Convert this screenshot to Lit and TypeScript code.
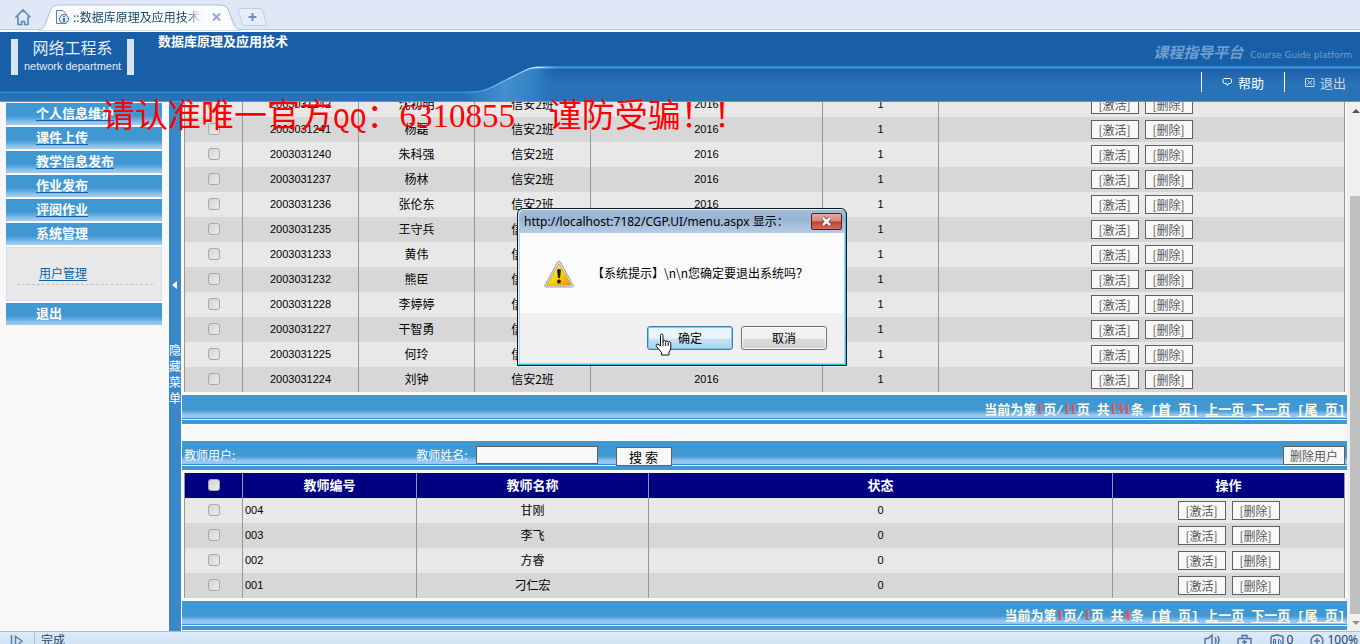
import { LitElement, html, css } from "lit";
import { customElement } from "lit/decorators.js";

type Person = [string, string];

const students: Person[] = [
  ["2003031242", "沈初明"],
  ["2003031241", "杨磊"],
  ["2003031240", "朱科强"],
  ["2003031237", "杨林"],
  ["2003031236", "张伦东"],
  ["2003031235", "王守兵"],
  ["2003031233", "黄伟"],
  ["2003031232", "熊臣"],
  ["2003031228", "李婷婷"],
  ["2003031227", "干智勇"],
  ["2003031225", "何玲"],
  ["2003031224", "刘钟"],
];

const teachers: Person[] = [
  ["004", "甘刚"],
  ["003", "李飞"],
  ["002", "方睿"],
  ["001", "刁仁宏"],
];

const controls = css`
  :host { display: block; }
  * { box-sizing: border-box; }
  button, input { font-family: inherit; margin: 0; }
  input[type="checkbox"] {
    appearance: none;
    display: block;
    width: 12px;
    height: 12px;
    margin: 0 auto;
    border: 1px solid #a8a8a8;
    border-radius: 3px;
    background: linear-gradient(135deg, #d4d4d4, #ececec);
  }
  .plain {
    height: 19px;
    padding: 0;
    border: 1px solid #606060;
    background: #f8f8f8;
    color: #585858;
    font-size: 12px;
    line-height: 17px;
  }
`;

/** Browser chrome: home button, page tab and new-tab button. */
@customElement("tab-strip")
class TabStrip extends LitElement {
  static styles = css`
    :host { display: block; }
    .strip {
      display: flex;
      height: 32px;
      background: linear-gradient(#e0e7f6 29px, #b9c8dd 29px 30px, #fbfcfe 30px);
    }
    button { padding: 0; border: 0; background: none; }
    .home { width: 44px; height: 28px; padding: 2px 0 0 3px; }
    .tab {
      position: relative;
      display: flex;
      align-items: center;
      width: 196px;
      height: 30px;
      margin-left: -5px;
      padding: 4px 0 0 16px;
      box-sizing: border-box;
    }
    .shape { position: absolute; inset: 0; }
    .icon, .title, .close { position: relative; }
    .title {
      flex: 0 0 130px;
      margin-left: 4px;
      overflow: hidden;
      white-space: nowrap;
      font-size: 12px;
      line-height: 18px;
      color: #1d4468;
      mask-image: linear-gradient(90deg, #000 112px, transparent);
    }
    .close { flex: none; width: 16px; height: 16px; margin-left: 6px; }
    .add { width: 32px; height: 30px; margin-left: 1px; padding-top: 4px; }
    svg { display: block; flex: none; }
  `;
  render() {
    return html`<nav class="strip">
      <button class="home" aria-label="主页">
        <svg width="40" height="26" fill="none" stroke="#5f86b6" stroke-width="1.6">
          <path d="M12.500 15.500 20 8l7.500 7.500M15 14.500v8h3.500v-3h3v3H25v-8" />
        </svg>
      </button>
      <div class="tab">
        <svg class="shape" width="202" height="31">
          <path d="M0 29.500C5 29 5 27 7 22L12 9Q14 5 18 5H182Q187 5 189 9L195 25Q197 29.500 202 29.500V31H0Z" fill="#fbfcfe" stroke="#a9bfde" />
        </svg>
        <svg class="icon" width="14" height="16" fill="none" stroke="#6b7f94">
          <path d="M1.500 14.500V1.500H8L11 4.500V14.500Z" fill="#eef3f9" />
          <circle cx="9" cy="10" r="4.500" fill="#dce8f5" stroke="#4a74a0" />
          <path d="M9 7v1M9 9v4" stroke="#1c4f86" stroke-width="1.500" />
        </svg>
        <span class="title">::数据库原理及应用技术课程</span>
        <button class="close" aria-label="关闭标签">
          <svg width="16" height="16" stroke="#8baad0" stroke-width="2"><path d="M4 4.500 11 11.500M11 4.500 4 11.500" /></svg>
        </button>
      </div>
      <button class="add" aria-label="新标签">
        <svg width="34" height="26" fill="none" stroke="#c0cfe4">
          <path d="M3 4.500H24Q26 4.500 27 7L31 21.500H9Q7 21.500 6 19L2 6Q2 4.500 3 4.500Z" fill="#e7edf8" />
          <path d="M16.500 9v8M12.500 13h8" stroke="#7190b8" stroke-width="2" />
        </svg>
      </button>
    </nav>`;
  }
}

/** Blue banner with department logo, course title and top links. */
@customElement("site-banner")
class SiteBanner extends LitElement {
  static styles = css`
    :host { display: block; }
    header {
      position: relative;
      display: flex;
      height: 70px;
      background: linear-gradient(#185fa8 59px, #2e8ad2 60px 61px, #2672b8 61px 69px, #4a9ad8 69px);
      color: #fff;
      overflow: hidden;
    }
    .swoosh { position: absolute; top: 34px; left: 448px; right: 0; display: flex; height: 36px; }
    .swoosh svg { position: relative; z-index: 1; flex: none; }
    .shelf {
      flex: 1;
      margin-left: -20px;
      background: linear-gradient(#2173bc, #389be0 1px 2px, #205fa9 3px, #2873b8 18px 35px, #4a9ad8 35px);
    }
    .logo {
      position: relative;
      display: flex;
      flex-direction: column;
      align-items: center;
      width: 123px;
      height: 36px;
      margin: 7px 0 0 11px;
      box-sizing: border-box;
      border: solid #d9e4f3;
      border-width: 0 7px;
      color: #e4edf8;
      white-space: nowrap;
    }
    .cn { font-size: 16px; line-height: 17px; }
    .en { font: 11px/21px "Liberation Sans", sans-serif; }
    h1 { position: relative; margin: 0 auto 0 24px; font-size: 13px; line-height: 17px; }
    .right { position: relative; display: flex; flex-direction: column; align-items: flex-end; }
    .platform { display: flex; align-items: baseline; gap: 7px; height: 40px; padding: 10px 8px 0 0; box-sizing: border-box; color: #6f9fd0; white-space: nowrap; }
    .platform i { font-size: 15px; font-weight: bold; line-height: 20px; }
    .platform small { font: 9px/20px "DejaVu Sans", sans-serif; }
    .links { display: flex; height: 22px; }
    a {
      display: flex;
      align-items: center;
      gap: 5px;
      height: 20px;
      padding: 0 20px;
      border-left: 1px solid #fff;
      color: #fff;
      font-size: 13px;
      text-decoration: none;
    }
    a + a { color: #c3dcf2; padding: 0 14px 0 19px; }
  `;
  render() {
    return html`<header>
      <div class="swoosh">
        <svg width="108" height="36">
          <defs>
            <linearGradient id="g"><stop offset="0" stop-color="#2672b8" /><stop offset=".45" stop-color="#438fd0" /><stop offset=".78" stop-color="#317fc3" /><stop offset="1" stop-color="#2872b8" stop-opacity="0" /></linearGradient>
            <linearGradient id="l"><stop offset="0" stop-color="#2e8ad2" /><stop offset=".8" stop-color="#c8e4fa" /><stop offset="1" stop-color="#389be0" /></linearGradient>
          </defs>
          <path d="M16 27C42 27 40 22 76 5Q82 1.500 88 1.500H108V35H16Z" fill="url(#g)" />
          <path d="M16 26.500C42 26 40 22 76 5Q82 1.500 88 1.500H108" fill="none" stroke="url(#l)" stroke-width="1.300" />
        </svg>
        <div class="shelf"></div>
      </div>
      <div class="logo"><span class="cn">网络工程系</span><span class="en">network department</span></div>
      <h1>数据库原理及应用技术</h1>
      <div class="right">
        <div class="platform"><i>课程指导平台</i><small>Course Guide platform</small></div>
        <nav class="links">
          <a href="#help"><svg width="11" height="10" fill="none" stroke="currentColor"><path d="M2 1.500h6l1.500 1v3l-1.500 1H6.500L5.500 8.500 4.500 6.500H2.500l-1.500-1v-3Z" /></svg>帮助</a>
          <a href="#exit"><svg width="11" height="11" fill="none" stroke="currentColor"><path d="M1.500 1.500h8.500v8H1.500zM3.500 3.500l4.500 4M8 3.500l-4.500 4" /></svg>退出</a>
        </nav>
      </div>
    </header>`;
  }
}

@customElement("side-menu")
class SideMenu extends LitElement {
  static styles = css`
    :host { display: flex; flex: 0 0 181px; }
    * { box-sizing: border-box; }
    nav { flex: 1; padding: 1px 7px 0 6px; background: #f8f8f8; }
    .item {
      display: block;
      height: 22px;
      margin-bottom: 2px;
      padding-left: 30px;
      background: linear-gradient(#4098d2 13px, #62aadc 16px, #8cc0ea 19px, #a0ccf2);
      color: #fff;
      font-size: 13px;
      font-weight: bold;
      line-height: 20px;
      text-decoration: underline #0d61a4;
      text-underline-offset: 2px;
    }
    .bare { text-decoration: none; }
    .sub { height: 54px; margin-bottom: 2px; padding: 17px 8px 0 10px; border: 1px solid #d0e0f4; background: #e8e8e8; }
    .sub div { height: 20px; padding-left: 22px; border-bottom: 1px dashed #c4c4c4; font-size: 12px; line-height: 16px; }
    .sub a { color: #0d61a4; text-underline-offset: 2px; }
    button {
      display: flex;
      flex-direction: column;
      align-items: center;
      justify-content: flex-start;
      width: 12px;
      padding: 178px 0 0;
      border: 0;
      background: #3a88ca;
      color: #fff;
      font-family: inherit;
      font-size: 12px;
      line-height: 16px;
    }
    svg { flex: none; margin-bottom: 52px; }
  `;
  render() {
    return html`<nav>
        ${["个人信息维护", "课件上传", "教学信息发布", "作业发布", "评阅作业"].map((t) => html`<a class="item" href="#m">${t}</a>`)}
        <a class="item bare" href="#m">系统管理</a>
        <div class="sub"><div><a href="#users">用户管理</a></div></div>
        <a class="item bare" href="#m">退出</a>
      </nav>
      <button>
        <svg width="8" height="10"><path d="M6 1V9L1 5Z" fill="#fff" /></svg>
        ${[..."隐藏菜单"].map((c) => html`<span>${c}</span>`)}
      </button>`;
  }
}

/** Half-width characters take a fixed-pitch face beside the full-width ones. */
const mixed = (text: string) =>
  text.split(/([\[\]\/ ]+)/).map((part) => (/^[\[\]\/ ]+$/.test(part) ? html`<span class="half">${part}</span>` : part));

@customElement("page-bar")
class PageBar extends LitElement {
  static properties = { pages: {}, total: {} };
  declare pages: string;
  declare total: string;
  static styles = css`
    :host { display: block; }
    .bar {
      display: flex;
      justify-content: flex-end;
      gap: 7px;
      height: 29px;
      padding-right: 2px;
      background: linear-gradient(#4098d2 15px, #62aadc 17px, #98c6f0 20px 23px, #3a8ee0 23px 24px, #e8f4ff 24px 25px, #4098d2 25px);
      color: #fffbe8;
      font-size: 13px;
      font-weight: bold;
      line-height: 27px;
      white-space: pre;
    }
    a { color: inherit; text-underline-offset: 2px; }
    .half { font-family: "Liberation Mono", monospace; font-size: 12px; }
    b { color: #ff5050; font-family: "Liberation Serif", serif; font-size: 14px; line-height: 20px; }
  `;
  render() {
    return html`<div class="bar"><span>当前为第<b>1</b>页${mixed("/")}<b>${this.pages}</b>页</span><span>共<b>${this.total}</b>条</span>${["[首 页]", "上一页", "下一页", "[尾 页]"].map((t) => html`<a href="#page">${mixed(t)}</a>`)}</div>`;
  }
}

const rowTools = html`<div class="tools"><button class="plain">[激活]</button><button class="plain">[删除]</button></div>`;

@customElement("user-lists")
class UserLists extends LitElement {
  static styles = [
    controls,
    css`
      :host { display: flex; flex: 1; min-width: 0; }
      .content {
        display: flex;
        flex: 1;
        flex-direction: column;
        justify-content: flex-end;
        min-width: 0;
        padding: 0 0 1px 1px;
        overflow: hidden;
        background: #f8f8f8;
      }
      table {
        flex: none;
        width: calc(100% - 4px);
        margin: 0 2px 3px;
        border-collapse: collapse;
        table-layout: fixed;
        color: #000;
        font-size: 12px;
        line-height: 22px;
        text-align: center;
      }
      td, th { height: 25px; padding: 0 0 2px; border: solid #979797; border-width: 0 1px; white-space: nowrap; }
      td:last-child { padding: 0; }
      th { background: #000080; color: #fff; font-size: 13px; }
      td { background: #e8e8e8; }
      tbody tr:nth-child(even) td { background: #d7d7d7; }
      .num { font-size: 11px; font-family: "Liberation Sans", sans-serif; }
      .left { padding-left: 2px; text-align: left; }
      .w5 { width: 5%; } .w10 { width: 10%; } .w15 { width: 15%; } .w20 { width: 20%; } .w35 { width: 35%; } .w40 { width: 40%; }
      .tools { display: flex; justify-content: center; gap: 6px; }
      .tools .plain { width: 48px; }
      page-bar { flex: none; }
      .search {
        display: flex;
        flex: none;
        height: 29px;
        margin: 17px 0 3px;
        padding: 0 2px;
        background: linear-gradient(#4098d2 15px, #62aadc 17px, #98c6f0 20px 23px, #3a8ee0 23px 24px, #e8f4ff 24px 25px, #4098d2 25px);
        color: #fff;
        font-size: 12px;
        line-height: 27px;
      }
      .caption { flex: 0 0 20%; }
      label { display: flex; gap: 8px; }
      .search input { width: 122px; height: 18px; margin-top: 5px; border: 1px solid #606060; background: #f8f8f8; }
      .find { width: 56px; margin: 6px auto 0 18px; color: #000; font-size: 13px; }
      .remove { width: 62px; margin-top: 5px; }
      .scroll { display: flex; flex: 0 0 13px; flex-direction: column; align-items: flex-end; background: #f0f0f0; }
      .thumb { flex: 1; align-self: stretch; margin: 77px 0 0 3px; background: #c0c0c0; }
      .scroll svg { flex: none; margin: 5px 0 4px; }
    `,
  ];
  render() {
    return html`<div class="content">
        <table>
          <colgroup><col class="w5" /><col class="w10" /><col class="w10" /><col class="w10" /><col class="w20" /><col class="w10" /><col class="w35" /></colgroup>
          <tbody>
            ${students.map(([id, name]) => html`<tr>
              <td><input type="checkbox" aria-label=${name} /></td><td class="num">${id}</td><td>${name}</td><td>信安2班</td>
              <td class="num">2016</td><td class="num">1</td><td>${rowTools}</td></tr>`)}
          </tbody>
        </table>
        <page-bar pages="11" total="131"></page-bar>
        <div class="search">
          <span class="caption">教师用户:</span>
          <label>教师姓名: <input type="text" /></label>
          <button class="plain find">搜 索</button>
          <button class="plain remove">删除用户</button>
        </div>
        <table>
          <colgroup><col class="w5" /><col class="w15" /><col class="w20" /><col class="w40" /><col class="w20" /></colgroup>
          <thead><tr><th><input type="checkbox" aria-label="全选" /></th><th>教师编号</th><th>教师名称</th><th>状态</th><th>操作</th></tr></thead>
          <tbody>
            ${teachers.map(([id, name]) => html`<tr>
              <td><input type="checkbox" aria-label=${name} /></td><td class="num left">${id}</td><td>${name}</td><td class="num">0</td><td>${rowTools}</td></tr>`)}
          </tbody>
        </table>
        <page-bar pages="1" total="4"></page-bar>
      </div>
      <div class="scroll">
        <svg width="8" height="8"><path d="M0 6 4 2 8 6Z" fill="#505050" /></svg>
        <div class="thumb"></div>
        <svg width="8" height="8"><path d="M0 2 4 6 8 2Z" fill="#909090" /></svg>
      </div>`;
  }
}

@customElement("confirm-box")
class ConfirmBox extends LitElement {
  static styles = css`
    :host { display: block; }
    * { box-sizing: border-box; }
    .box {
      display: flex;
      flex-direction: column;
      width: 330px;
      height: 158px;
      padding: 0 2px 2px;
      border: 1px solid #101820;
      border-radius: 6px 6px 0 0;
      background: linear-gradient(#a4bcd9, #98b4d4 10px, #b4cce6 24px, #b9d2ea);
      box-shadow: inset -1px -1px #28c8e0, inset 1px 1px #e0f0fc;
      color: #000;
      font-size: 12px;
    }
    .bar { display: flex; justify-content: space-between; height: 24px; padding: 0 2px 0 4px; line-height: 25px; font-family: "Noto Sans", "Noto Sans CJK SC", sans-serif; }
    .x { width: 31px; height: 17px; margin-top: 4px; padding: 0; border: 1px solid #5a1c20; border-radius: 2px; background: linear-gradient(#e8a8a0, #d88478 7px, #c04030 8px, #d07060); }
    .x svg { display: block; margin: 0 auto; }
    .body { display: flex; flex: 1; align-items: center; gap: 17px; padding: 2px 0 0 23px; background: #fcfcfc; }
    .body span { padding-bottom: 4px; }
    .foot { display: flex; justify-content: flex-end; gap: 8px; height: 50px; padding: 13px 17px 0; background: #f0f0f0; }
    .btn { width: 86px; height: 24px; padding: 0; border: 1px solid #707070; border-radius: 3px; background: linear-gradient(#f2f2f2 11px, #dcdcdc 12px, #d0d0d0); box-shadow: inset 0 0 0 1px #fafafa; font-family: inherit; font-size: 12px; line-height: 20px; }
    .ok { border-color: #3c7fb1; background: linear-gradient(#eaf4fb 11px, #c8e2f2 12px, #a8d2ea); box-shadow: inset 0 0 0 1px #7cc8ee; }
    .hand { position: absolute; left: 138px; top: 125px; }
  `;
  render() {
    return html`<div class="box" role="alertdialog" aria-label="确认">
      <div class="bar"><span>http://localhost:7182/CGP.UI/menu.aspx 显示：</span>
        <button class="x" aria-label="关闭"><svg width="13" height="11"><path d="M3 2 10 9M10 2 3 9" stroke="#6b3034" stroke-width="4" /><path d="M3 2 10 9M10 2 3 9" stroke="#fff" stroke-width="2.500" /></svg></button>
      </div>
      <div class="body">
        <svg width="32" height="30">
          <defs><linearGradient id="w" x1="0" y1="0" x2="1" y2="1"><stop offset=".2" stop-color="#fff36a" /><stop offset=".5" stop-color="#ffd800" /><stop offset="1" stop-color="#f09000" /></linearGradient></defs>
          <path d="M16 2Q17 2 18 4L30 26Q31 28 29 28H3Q1 28 2 26L14 4Q15 2 16 2Z" fill="#d4d8dc" stroke="#a0a4a8" />
          <path d="M16 5 28 26H4Z" fill="url(#w)" stroke="#c88c10" stroke-width=".6" />
          <path d="M14 11Q16 9 18 11L17 19H15Z" fill="#202028" /><circle cx="16" cy="22.500" r="1.900" fill="#202028" />
        </svg>
        <span>【系统提示】\\n\\n您确定要退出系统吗？</span>
      </div>
      <div class="foot"><button class="btn ok">确定</button><button class="btn">取消</button></div>
    </div>
    <svg class="hand" width="18" height="24">
      <path d="M5.500 13V2.500Q5.500 1 6.750 1T8 2.500V9Q8 7.500 9.300 7.500T10.600 9Q10.700 8 11.900 8T13.200 9.500Q13.400 8.700 14.500 8.700T15.800 10.500V15Q15.800 17 14 19V22H6.500V19.500L1.500 13.500Q.6 12 1.800 11.300T4 12Z" fill="#fff" stroke="#101010" />
      <path d="M8 9v4M10.600 9.500v3.500M13.200 10v3" stroke="#101010" />
    </svg>`;
  }
}

@customElement("status-line")
class StatusLine extends LitElement {
  static styles = css`
    :host { display: block; }
    footer {
      display: flex;
      height: 13px;
      overflow: hidden;
      background: linear-gradient(#a9bdd8 1px, #dce9f8 1px, #d3e4f5);
      color: #1d4468;
      font-size: 12px;
      line-height: 18px;
    }
    svg { flex: none; }
    .done { margin-right: auto; }
    .figure { font-family: "Noto Sans", sans-serif; line-height: 17px; }
    .ad { margin-right: 16px; }
    .zoom { padding-right: 2px; }
  `;
  render() {
    return html`<footer>
      <svg width="41" height="13" fill="none" stroke="#5b7fa8" stroke-width="1.500"><path d="M11.500 4v12M15.500 5.500V16L22 10Z" /><path d="M34.500 1V13" stroke="#a9bdd8" stroke-width="1" /></svg>
      <span class="done">完成</span>
      <svg width="84" height="13" fill="none" stroke="#4d7299" stroke-width="1.400">
        <path d="M2 7.500H5L9 4V15M2 7.500V13M12 6.500q2 3 0 6M14.500 5q3 4 0 8" />
        <path d="M39 6.500V4.500h5v2M35 7.500H48V13M35 7.500V13M41.500 9v4M39 11h5" />
        <path d="M68 5.500 74 3.800 80 5.500V13M68 5.500V13" /><path d="M70.500 13V8.500h2V13M70.500 11h2M75.500 13V8.500q3 0 2.500 4.500" stroke-width="1" />
      </svg>
      <span class="figure ad">0</span>
      <svg width="18" height="13" fill="none" stroke="#4d7299" stroke-width="1.400"><circle cx="8" cy="10" r="6" /><path d="M8 7v6M5 10h6" /></svg>
      <span class="figure zoom">100%</span>
    </footer>`;
  }
}

@customElement("app-root")
class AppRoot extends LitElement {
  static styles = css`
    :host {
      position: relative;
      display: flex;
      flex-direction: column;
      height: 100vh;
      overflow: hidden;
      background: #f8f8f8;
      font-family: "Noto Sans CJK SC", sans-serif;
    }
    main { display: flex; flex: 1; min-height: 0; overflow: hidden; }
    .notice {
      position: absolute;
      left: 102px;
      top: 97px;
      color: #f00;
      font: 33px/38px "Liberation Serif", "Noto Sans CJK SC", serif;
      white-space: pre;
    }
    .latin { font-family: "Liberation Mono", monospace; font-size: 28px; }
    confirm-box { position: absolute; left: 517px; top: 208px; }
  `;
  render() {
    return html`<tab-strip></tab-strip>
      <site-banner></site-banner>
      <main><side-menu></side-menu><user-lists></user-lists></main>
      <status-line></status-line>
      <div class="notice">请认准唯一官方<span class="latin">QQ</span>：6310855<span class="latin">  </span>谨防受骗！！</div>
      <confirm-box></confirm-box>`;
  }
}
